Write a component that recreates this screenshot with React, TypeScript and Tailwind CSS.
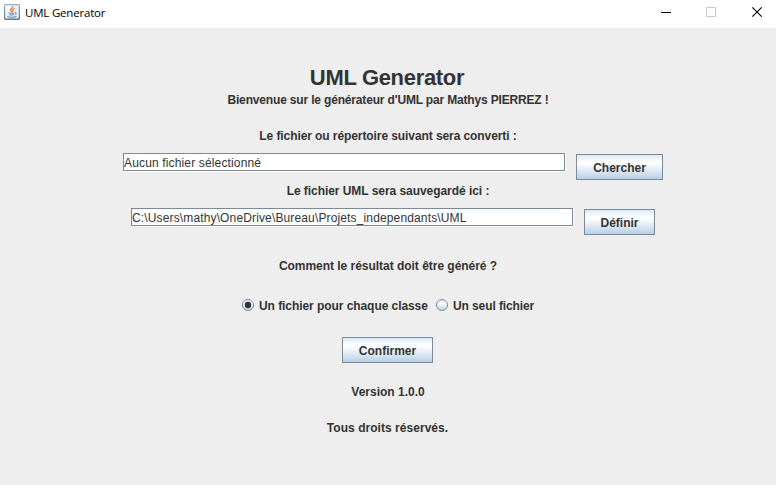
import { ReactNode, useState } from "react";

function JavaIcon() {
  return (
    <svg width="16" height="16" viewBox="0 0 16 16" className="block shrink-0">
      <defs>
        <linearGradient id="java-bg" x1="0" y1="0" x2="0" y2="1">
          <stop offset="0" stopColor="#9aafbf" />
          <stop offset="1" stopColor="#587a94" />
        </linearGradient>
        <linearGradient id="java-face" x1="0" y1="0" x2="1" y2="1">
          <stop offset="0" stopColor="#ffffff" />
          <stop offset="1" stopColor="#dde4e9" />
        </linearGradient>
      </defs>
      <rect width="16" height="16" rx="1.5" fill="url(#java-bg)" />
      <rect x="1.2" y="1.2" width="13.6" height="13.4" rx="0.8" fill="url(#java-face)" />
      <path d="M8.9 2.1C9.6 3.8 5.8 4.4 6.6 6.2C6.9 6.9 7.6 7.3 7.7 8.1M10.6 4.2C8.2 5 8 5.8 8.6 6.6C9 7.2 8.8 7.6 8.3 8.2" fill="none" stroke="#ea7a35" strokeWidth="1.2" />
      <path d="M4.5 8.9C6 9.5 8.8 9.4 10.3 8.9M5.3 10.7C6.6 11.2 8.6 11.2 9.8 10.7M11 8.7C12.8 8.4 12.6 10 10.8 10.5M3.6 12.1C3 12.9 5.4 13.3 8 13.2C10.6 13.2 13 12.6 12.2 11.9" fill="none" stroke="#4a7896" strokeWidth="0.9" />
    </svg>
  );
}

function TitleBar() {
  return (
    <header className="flex h-7 items-start bg-white">
      <div className="flex h-6 flex-1 items-center gap-[5px] pl-1">
        <JavaIcon />
        <span className="pt-px font-['Open_Sans','Noto_Sans',sans-serif] text-[11.5px] leading-4 tracking-[-0.2px] text-black">
          UML Generator
        </span>
      </div>
      <svg width="120" height="28" viewBox="0 0 120 28" className="block">
        <path d="M5 12.5h10" stroke="#000" />
        <rect x="50.5" y="7.5" width="9" height="9" fill="none" stroke="#c8c8c8" />
        <path d="M96.3 7.3l9.4 9.4M105.7 7.3l-9.4 9.4" stroke="#000" strokeWidth="1.1" />
      </svg>
    </header>
  );
}

function Label({ children, className }: { children: ReactNode; className: string }) {
  return <p className={`h-4 text-center font-bold whitespace-nowrap ${className}`}>{children}</p>;
}

function PathField({ value, className }: { value: string; className: string }) {
  return (
    <div className="h-[19px] w-[443px] border-r border-b border-white">
      <div className="h-[18px] border border-[#7a8a99] bg-white">
        <span className={`block pt-px leading-4 whitespace-pre ${className}`}>{value}</span>
      </div>
    </div>
  );
}

function MetalButton({ children, className }: { children: ReactNode; className: string }) {
  return (
    <button
      className={`block h-[26px] border border-[#7a8a99] bg-[linear-gradient(180deg,#dde8f3_0%,#ffffff_30%,#ffffff_36%,#b8cfe5_100%)] text-center leading-4 font-bold whitespace-nowrap ${className}`}
    >
      <span className="block h-[14px]">{children}</span>
    </button>
  );
}

function Radio({ selected, label, onSelect, className }: { selected: boolean; label: string; onSelect: () => void; className: string }) {
  return (
    <button onClick={onSelect} role="radio" aria-checked={selected} className="flex items-start gap-[5px]">
      <svg width="12" height="12" viewBox="0 0 12 12" className="mt-px block">
        <defs>
          <linearGradient id="radio-fill" x1="0" y1="0" x2="0" y2="1">
            <stop offset="0" stopColor="#dde8f3" />
            <stop offset=".33" stopColor="#fff" />
            <stop offset="1" stopColor="#b8cfe5" />
          </linearGradient>
        </defs>
        <circle cx="6" cy="6" r="5.5" fill="url(#radio-fill)" stroke="#7a8a99" />
        {selected && <circle cx="6" cy="6" r="3.2" fill="#333" />}
      </svg>
      <span className={`block h-4 text-left font-bold whitespace-nowrap ${className}`}>{label}</span>
    </button>
  );
}

export default function App() {
  const [single, setSingle] = useState(false);
  return (
    <div className="h-[485px] w-[776px] overflow-hidden bg-[#eeeeee] font-['Liberation_Sans',Arial,sans-serif] text-[12px] leading-4 text-[#333333]">
      <TitleBar />
      <main className="flex flex-col items-center pt-9">
        <h1 className="h-7 w-[776px] pr-[2px] text-center text-[22px] leading-7 font-bold tracking-[-0.32px]">UML Generator</h1>
        <Label className="tracking-[-0.166px]">Bienvenue sur le générateur d'UML par Mathys PIERREZ !</Label>
        <Label className="mt-5 tracking-[-0.085px]">Le fichier ou répertoire suivant sera converti :</Label>
        <div className="mt-[9px] flex w-[776px] items-start gap-[10px] pl-[123px]">
          <PathField value="Aucun fichier sélectionné" className="tracking-[0.15px]" />
          <MetalButton className="mt-px w-[87px]">Chercher</MetalButton>
        </div>
        <Label className="mt-[3px] tracking-[-0.05px]">Le fichier UML sera sauvegardé ici :</Label>
        <div className="mt-[9px] flex w-[776px] items-start gap-[10px] pl-[131px]">
          <PathField value="C:\Users\mathy\OneDrive\Bureau\Projets_independants\UML" className="tracking-[0.14px]" />
          <MetalButton className="mt-px w-[71px]">Définir</MetalButton>
        </div>
        <Label className="mt-[23px] tracking-[-0.03px]">Comment le résultat doit être généré ?</Label>
        <div role="radiogroup" className="mt-6 flex w-[776px] gap-2 pl-[242px]">
          <Radio selected={!single} onSelect={() => setSingle(false)} label="Un fichier pour chaque classe" className="w-[169px] tracking-[-0.065px]" />
          <Radio selected={single} onSelect={() => setSingle(true)} label="Un seul fichier" className="tracking-[-0.1px]" />
        </div>
        <MetalButton className="mt-[23px] mr-px w-[91px]">Confirmer</MetalButton>
        <Label className="mt-[21px]">Version 1.0.0</Label>
        <Label className="mt-5 mr-px tracking-[0.04px]">Tous droits réservés.</Label>
      </main>
    </div>
  );
}
